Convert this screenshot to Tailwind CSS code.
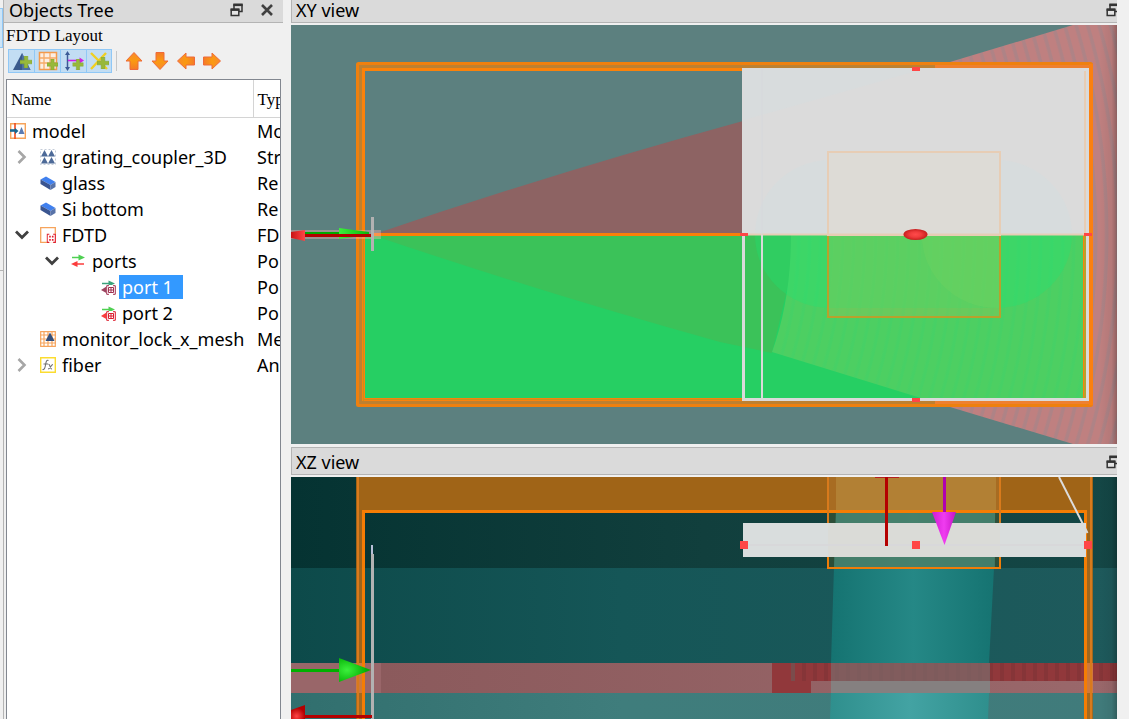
<!DOCTYPE html>
<html lang="en">
<head>
<meta charset="utf-8">
<title>FDTD Layout</title>
<script src="https://cdn.jsdelivr.net/npm/@tailwindcss/browser@4"></script>
</head>
<body class="h-screen overflow-hidden bg-[#f0f0f0] font-['Noto_Sans','Open_Sans',sans-serif] text-[18px] leading-[26px] text-black">
<svg class="absolute size-0">
  <defs>
    <symbol id="restore" viewBox="0 0 13 14"><path d="M4 6V2H12V8.500H9" fill="none" stroke="#333" stroke-width="1.500"/><path d="M3.300 1.800H12.700" stroke="#333" stroke-width="2.600"/><path d="M1.200 7H8.800V12.500H1.200Z" fill="#e4e4e4" stroke="#333" stroke-width="1.500"/><path d="M.5 6.500H9.500" stroke="#333" stroke-width="2.400"/></symbol>
    <symbol id="plus" viewBox="0 0 12 12"><path d="M4.200 0h3.600v4.200H12v3.600H7.800V12H4.200V7.800H0V4.200h4.200z" fill="#98b83a" stroke="#7fa02c" stroke-width=".5"/></symbol>
    <linearGradient id="arrowFill" x1="0" y1="0" x2="0" y2="1"><stop offset="0" stop-color="#f98a2c"/><stop offset=".5" stop-color="#fa9a12"/><stop offset="1" stop-color="#f57a28"/></linearGradient>
    <symbol id="arrow" viewBox="0 0 18 20"><path d="M9 1.500L17 10H13V18.500H5V10H1Z" fill="url(#arrowFill)" stroke="#ee6a3a" stroke-width="1"/></symbol>
    <symbol id="block" viewBox="0 0 16 16"><path d="M.5 4.500L6 1.500L15.500 7L10.500 10Z" fill="#4080ee"/><path d="M.5 4.500L10.500 10V15L.5 9Z" fill="#3a5590"/><path d="M10.500 10L15.500 7V12L10.500 15Z" fill="#5873a8"/></symbol>
    <symbol id="open" viewBox="0 0 14 10"><path d="M1 1.500L7 7.500L13 1.500" fill="none" stroke="#404040" stroke-width="2.800"/></symbol>
    <symbol id="closed" viewBox="0 0 10 14"><path d="M1.500 1L7.500 7L1.500 13" fill="none" stroke="#a6a6a6" stroke-width="2.600"/></symbol>
    <symbol id="solver" viewBox="0 0 10 10"><rect x=".2" y=".2" width="9.600" height="9.600" fill="#fff"/><path d="M3 .6H.7V9.400H3M7 .6H9.300V9.400H7" fill="none" stroke="currentColor" stroke-width="1.200"/><path d="M2.800 2.300h1.700v2H2.800zM5.700 2.300h1.700v2H5.700zM2.800 5.700h1.700v2H2.800zM5.700 5.700h1.700v2H5.700z" fill="currentColor"/></symbol>
    <symbol id="gridport" viewBox="0 0 10 10"><path d="M0 0H10V10H0Z" fill="#fff"/><path d="M3 .7H.7V9.300H3M7 .7H9.300V9.300H7M5 2V8M2.200 5H7.800M2.500 2.500H7.500V7.500H2.500Z" fill="none" stroke="currentColor" stroke-width="1"/></symbol>
  </defs>
</svg>
<div class="flex h-full">
  <!-- edge of the neighbouring dock -->
  <div class="flex w-[3px] shrink-0 flex-col">
    <div class="mt-2 h-10 border-y border-r border-[#90c8f6] bg-[#cce4f7]"></div>
    <div class="mt-[222px] border-t border-[#b4b4b4]"></div>
  </div>

  <aside class="flex w-[280px] shrink-0 flex-col border-l border-[#b4b4b4]">
    <header class="flex h-[23px] shrink-0 items-center border-b border-[#b4b4b4] bg-[#dadada] pr-[9px] pb-[2px] pl-[5px]">
      <h2 class="grow leading-5">Objects Tree</h2>
      <button aria-label="Float" class="mr-[17px] flex"><svg class="h-[14px] w-[13px]"><use href="#restore"/></svg></button>
      <button aria-label="Close" class="flex"><svg class="h-[14px] w-[14px]" viewBox="0 0 14 14"><path d="M2 2L12 12M12 2L2 12" stroke="#404040" stroke-width="2.600"/></svg></button>
    </header>
    <p class="h-[26px] shrink-0 pl-[2px] font-['Liberation_Serif',serif] text-[17px]">FDTD Layout</p>
    <div class="flex h-6 shrink-0 items-center pl-1">
      <button aria-label="Structures" class="flex h-6 w-[27px] items-center justify-center border border-[#90c8f6] bg-[#c2ddf3]"><svg class="h-5 w-5" viewBox="0 0 20 20"><path d="M10 2L18.500 19H1Z" fill="#3b5a8c"/><path d="M10 2L18.500 19H10Z" fill="#4d6fa4"/><use href="#plus" x="8" y="5" width="12" height="12"/></svg></button>
      <button aria-label="Mesh" class="flex h-6 w-[26px] items-center justify-center border border-l-0 border-[#90c8f6] bg-[#c2ddf3]"><svg class="h-5 w-5" viewBox="0 0 20 20"><path d="M1.500 1.500H18.500V18.500H1.500Z" fill="#fbeee3" stroke="#f39a4c" stroke-width="1.500"/><path d="M6 2V18M12 2V18M2 7H18M2 12H18" stroke="#f7ab68" stroke-width="1.300"/><use href="#plus" x="9" y="8" width="11" height="11"/></svg></button>
      <button aria-label="Sources" class="flex h-6 w-[26px] items-center justify-center border border-l-0 border-[#90c8f6] bg-[#c2ddf3]"><svg class="h-5 w-5" viewBox="0 0 20 20"><path d="M3.500 3V17" stroke="#3c5a96" stroke-width="1.500"/><path d="M3.500 0L6 4H1ZM3.500 20L6 16H1Z" fill="#3c5a96"/><path d="M4 9.500H17" stroke="#d21ee6" stroke-width="1.600"/><path d="M20 9.500L15.500 6.500V12.500Z" fill="#d21ee6"/><use href="#plus" x="8.500" y="8" width="11" height="11"/></svg></button>
      <button aria-label="Monitors" class="flex h-6 w-[25px] items-center justify-center border border-l-0 border-[#90c8f6] bg-[#c2ddf3]"><svg class="h-5 w-5" viewBox="0 0 20 20"><path d="M2 2L18 18M17 2L2 18" stroke="#f0cf22" stroke-width="2.400"/><use href="#plus" x="8" y="6" width="12" height="12"/></svg></button>
      <span class="mr-1 ml-1 h-5 border-l border-[#c8c8c8]"></span>
      <button aria-label="Move up" class="flex w-[26px] justify-center"><svg class="h-5 w-[18px]"><use href="#arrow"/></svg></button>
      <button aria-label="Move down" class="flex w-[26px] rotate-180 justify-center"><svg class="h-5 w-[18px]"><use href="#arrow"/></svg></button>
      <button aria-label="Move left" class="flex w-[26px] -rotate-90 justify-center"><svg class="h-5 w-[18px]"><use href="#arrow"/></svg></button>
      <button aria-label="Move right" class="flex w-[26px] rotate-90 justify-center"><svg class="h-5 w-[18px]"><use href="#arrow"/></svg></button>
    </div>
    <div class="mt-[6px] mr-[2px] ml-[2px] grow overflow-hidden border-x border-t border-[#828790] bg-white">
      <table class="w-full table-fixed border-collapse whitespace-nowrap">
        <colgroup><col class="w-[246px]"><col></colgroup>
        <thead>
          <tr class="h-[37px] border-b border-[#d4d4d4] text-left font-['Liberation_Serif',serif] text-[17px]">
            <th class="border-r border-[#d4d4d4] pt-1 pl-1 font-normal">Name</th>
            <th class="overflow-hidden pt-1 pl-1 font-normal">Type</th>
          </tr>
        </thead>
        <tbody>
          <tr class="h-[26px]"><td class="p-0"><div class="flex items-center gap-[6px] pl-[3px]"><svg class="size-4" viewBox="0 0 16 16"><path d="M.7.7H15.300V15.300H.7Z" fill="#fff" stroke="#f6a45c" stroke-width="1.400"/><path d="M5 0V16" stroke="#ee4a1c" stroke-width="1.600"/><path d="M0 7.500H6" stroke="#176690" stroke-width="2.600"/><path d="M8.500 8L5 5V11Z" fill="#176690"/><path d="M11.500 4L14.500 11H8.500Z" fill="#5a7cb4"/></svg>model</div></td><td class="overflow-hidden p-0 pl-1">Mo</td></tr>
          <tr class="h-[26px]"><td class="p-0"><div class="flex items-center pl-[10px]"><svg class="mr-[13px] h-[14px] w-[10px]"><use href="#closed"/></svg><svg class="mr-[6px] size-4" viewBox="0 0 16 16"><path d="M.5.5H15.500V15.500H.5Z" fill="none" stroke="#c4ccd8" stroke-dasharray="2 2"/><path d="M4.500 1L8 7.500H1ZM11.500 1L15 7.500H8ZM4.500 8L8 14.500H1ZM11.500 8L15 14.500H8Z" fill="#4d6a98"/></svg>grating_coupler_3D</div></td><td class="overflow-hidden p-0 pl-1">Str</td></tr>
          <tr class="h-[26px]"><td class="p-0"><div class="flex items-center gap-[6px] pl-[33px]"><svg class="size-4"><use href="#block"/></svg>glass</div></td><td class="overflow-hidden p-0 pl-1">Re</td></tr>
          <tr class="h-[26px]"><td class="p-0"><div class="flex items-center gap-[6px] pl-[33px]"><svg class="size-4"><use href="#block"/></svg>Si bottom</div></td><td class="overflow-hidden p-0 pl-1">Re</td></tr>
          <tr class="h-[26px]"><td class="p-0"><div class="flex items-center pl-[8px]"><svg class="mr-[11px] h-[10px] w-[14px]"><use href="#open"/></svg><svg class="mr-[6px] size-4 text-[#e0202c]" viewBox="0 0 16 16"><path d="M.7.7H15.300V15.300H.7Z" fill="#fff" stroke="#f6a45c" stroke-width="1.300"/><use href="#solver" x="6.500" y="6.500" width="9.500" height="9.500"/></svg>FDTD</div></td><td class="overflow-hidden p-0 pl-1">FD</td></tr>
          <tr class="h-[26px]"><td class="p-0"><div class="flex items-center pl-[38px]"><svg class="mr-[11px] h-[10px] w-[14px]"><use href="#open"/></svg><svg class="mr-[6px] size-4" viewBox="0 0 16 16"><path d="M2 4.500H10" stroke-width="1.500" stroke="#4fd052"/><path d="M15 4.500L8.500 1.500V7.500Z" fill="#4fd052"/><path d="M14 11H6" stroke="#fb3c3c" stroke-width="1.500"/><path d="M1 11L7.500 8V14Z" fill="#fb3c3c"/></svg>ports</div></td><td class="overflow-hidden p-0 pl-1">Po</td></tr>
          <tr class="h-[26px]"><td class="p-0"><div class="flex items-center pl-[93px]"><svg class="mr-[3px] size-4 text-[#a03050]" viewBox="0 0 16 16"><path d="M2 4.500H10" stroke="#3aa27c" stroke-width="1.500"/><path d="M15 4.500L8.500 1.500V7.500Z" fill="#3aa27c"/><path d="M1 11L8 6.500V15Z" fill="#9c4460"/><use href="#gridport" x="6" y="6" width="10" height="10"/></svg><span class="bg-[#3399ff] pr-[10px] pl-[3px] leading-[24px] text-white">port 1</span></div></td><td class="overflow-hidden p-0 pl-1">Po</td></tr>
          <tr class="h-[26px]"><td class="p-0"><div class="flex items-center gap-[6px] pl-[93px]"><svg class="size-4 text-[#dc1c2c]" viewBox="0 0 16 16"><path d="M2 4.500H10" stroke="#4fd052" stroke-width="1.500"/><path d="M15 4.500L8.500 1.500V7.500Z" fill="#4fd052"/><path d="M1 11L8 6.500V15Z" fill="#fb3c3c"/><use href="#gridport" x="6" y="6" width="10" height="10"/></svg>port 2</div></td><td class="overflow-hidden p-0 pl-1">Po</td></tr>
          <tr class="h-[26px]"><td class="p-0"><div class="flex items-center gap-[6px] pl-[33px]"><svg class="size-4" viewBox="0 0 16 16"><path d="M.7.7H15.300V15.300H.7ZM4 0V16M8 0V16M12 0V16M0 4H16M0 8H16M0 12H16" fill="#fff" stroke="#f6a45c" stroke-width="1.200"/><path d="M10 1.500L14.500 10H5.500Z" fill="#34507c"/></svg>monitor_lock_x_mesh</div></td><td class="overflow-hidden p-0 pl-1">Me</td></tr>
          <tr class="h-[26px]"><td class="p-0"><div class="flex items-center pl-[10px]"><svg class="mr-[13px] h-[14px] w-[10px]"><use href="#closed"/></svg><svg class="mr-[6px] size-4" viewBox="0 0 16 16"><path d="M.7.7H15.300V15.300H.7Z" fill="#fff" stroke="#fbdc30" stroke-width="1.400"/><path d="M8.500 3.500C6.500 2.500 6 5 5.500 8S4.500 13 2.500 12.500M3.500 7H8M8.500 7.500C10 6.500 10 12.500 12 12M13 7.500C11 7.500 10.500 12 8 12" fill="none" stroke="#707070" stroke-width="1.100"/></svg>fiber</div></td><td class="overflow-hidden p-0 pl-1">An</td></tr>
        </tbody>
      </table>
    </div>
  </aside>

  <main class="ml-2 flex min-w-0 grow flex-col">
    <header class="flex h-[23px] shrink-0 items-center overflow-hidden border-b border-l border-[#b4b4b4] bg-[#dadada] pb-[2px] pl-1">
      <h2 class="grow leading-5">XY view</h2>
      <button aria-label="Float XY view" class="-mr-[2px] flex"><svg class="h-[14px] w-[13px]"><use href="#restore"/></svg></button>
    </header>
    <svg class="mt-[2px] min-h-0 w-full flex-[419]" viewBox="291 25 826 419" preserveAspectRatio="xMinYMin slice" role="img" aria-label="XY view">
      <defs>
        <radialGradient id="rings" gradientUnits="userSpaceOnUse" cx="372" cy="235" r="11" spreadMethod="repeat"><stop offset="0" stop-color="#bf8080"/><stop offset=".55" stop-color="#bf8080"/><stop offset=".7" stop-color="#ae8386"/><stop offset=".9" stop-color="#ae8386"/><stop offset="1" stop-color="#bf8080"/></radialGradient>
        <radialGradient id="ringsGreen" gradientUnits="userSpaceOnUse" cx="372" cy="235" r="11" spreadMethod="repeat"><stop offset="0" stop-color="#4dcf62"/><stop offset=".55" stop-color="#4dcf62"/><stop offset=".75" stop-color="#47d065"/><stop offset=".9" stop-color="#47d065"/><stop offset="1" stop-color="#4dcf62"/></radialGradient>
        <clipPath id="lower"><path d="M365 235H1086V399H365Z"/></clipPath>
        <radialGradient id="ball"><stop offset="0" stop-color="#ff4a4a"/><stop offset=".5" stop-color="#f03c3c"/><stop offset="1" stop-color="#c81e1e"/></radialGradient>
        <linearGradient id="greenCone"><stop offset="0" stop-color="#3cf03c"/><stop offset="1" stop-color="#0ab40a"/></linearGradient>
        <linearGradient id="redCone"><stop offset="0" stop-color="#c81414"/><stop offset="1" stop-color="#ff4646"/></linearGradient>
        <linearGradient id="edgeShade"><stop offset="0" stop-color="#000" stop-opacity="0"/><stop offset=".7" stop-color="#000" stop-opacity=".06"/><stop offset="1" stop-color="#000" stop-opacity=".25"/></linearGradient>
      </defs>
      <path d="M291 25H1117V444H291Z" fill="#5c807f"/>
      <path d="M372 235Q550 174 743 121V235Z" fill="#8d6363"/>
      <path d="M780 113L950 62L1073 25H1117V444H1073L950 407L772 352Q791 300 791 235Z" fill="url(#rings)"/>
      <g clip-path="url(#lower)">
        <path d="M365 235H1086V399H365Z" fill="#26cf63"/>
        <path d="M372 235Q550 295 720 342L772 353L800 235Z" fill="#3bc259"/>
        <path d="M772 352L950 407H1093V235H791Q791 300 772 352Z" fill="url(#ringsGreen)"/>
        <path d="M755 235H1072A75 73 0 0 1 997 308H830A75 73 0 0 1 755 235Z" fill="#14e878" fill-opacity=".28"/>
        <path d="M828 235H1000V317H828Z" fill="#c8b84c" fill-opacity=".23"/>
        <path d="M922 235A75 73 0 0 0 997 308H1000V235Z" fill="#84d860" fill-opacity=".2"/>
      </g>
      <path d="M828 235V317H1000V235" fill="none" stroke="#b9a02c" stroke-width="2"/>
      <g fill="none">
        <rect x="360.500" y="66.500" width="728" height="336" stroke="#be8030" stroke-width="3"/>
        <path d="M935 66.500H1090M935 402.500H1090" stroke="#ee8030" stroke-width="3"/>
        <rect x="357.500" y="63.500" width="734" height="342" rx="1" stroke="#ee800f" stroke-width="3"/>
        <rect x="363.500" y="69.500" width="721" height="330" stroke="#fb820a" stroke-width="3"/>
        <path d="M1091 64V405" stroke="#fb8010" stroke-width="4"/>
        <path d="M372 234.500H743" stroke="#fa8008" stroke-width="3"/>
        <path d="M363.500 239V401M363 399.500H743" stroke="#c8901c" stroke-width="1"/>
        <path d="M1085 235V399" stroke="#b9a02c" stroke-width="2"/>
      </g>
      <path d="M742 68H1089V235H742Z" fill="#dbdbdb"/>
      <path d="M744 70H920L744 120Z" fill="#d8dcdd"/>
      <path d="M755 235A75 75 0 0 1 830 160H997A75 75 0 0 1 1072 235Z" fill="#d7dcdd"/>
      <path d="M828 152H1000V235H828Z" fill="#dddbd6" stroke="#e7cdb5" stroke-width="2"/>
      <path d="M744 234.500H1087M1085 71V234" fill="none" stroke="#e7cdb5" stroke-width="2"/>
      <path d="M762 69V235" stroke="#d6d8dc" stroke-width="1"/>
      <path d="M743.500 235V399.500H1087.500V235" fill="none" stroke="#dadada" stroke-width="3"/>
      <path d="M762 235V399" stroke="#dadada" stroke-width="2"/>
      <path d="M912 67H920V71H912ZM912 398H920V402H912ZM740 233H748V236H740ZM1084 233H1092V236H1084Z" fill="#ff4646"/>
      <ellipse cx="915.500" cy="234.500" rx="12" ry="5.500" fill="url(#ball)"/>
      <path d="M291 230H381V239H291Z" fill="#ffb0b0" fill-opacity=".4"/>
      <path d="M305 233H345" stroke="#00aa00" stroke-width="2"/>
      <path d="M339 228L369 232V235L339 239Z" fill="url(#greenCone)"/>
      <path d="M305 235.500H372" stroke="#b40000" stroke-width="3"/>
      <path d="M291 232L305 230V241L291 238Z" fill="url(#redCone)"/>
      <path d="M372.500 217V251" stroke="#b2b2b2" stroke-width="3"/>
      <path d="M1099 25H1117V444H1099Z" fill="url(#edgeShade)"/>
    </svg>

    <header class="mt-[3px] flex h-[28px] shrink-0 items-center overflow-hidden border-y border-l border-[#b4b4b4] bg-[#dadada] pt-[2px] pl-1">
      <h2 class="grow leading-6">XZ view</h2>
      <button aria-label="Float XZ view" class="-mr-[2px] flex"><svg class="h-[14px] w-[13px]"><use href="#restore"/></svg></button>
    </header>
    <svg class="mt-[2px] min-h-0 w-full flex-[242]" viewBox="291 477 826 242" preserveAspectRatio="xMinYMin slice" role="img" aria-label="XZ view">
      <defs>
        <linearGradient id="sky"><stop offset="0" stop-color="#053332"/><stop offset=".5" stop-color="#113f3d"/><stop offset="1" stop-color="#144746"/></linearGradient>
        <linearGradient id="oxide"><stop offset="0" stop-color="#0d4a4a"/><stop offset=".4" stop-color="#155657"/><stop offset="1" stop-color="#1e5a5c"/></linearGradient>
        <linearGradient id="base"><stop offset="0" stop-color="#316f6e"/><stop offset=".4" stop-color="#3f7d7c"/><stop offset="1" stop-color="#407b7b"/></linearGradient>
        <linearGradient id="core"><stop offset="0" stop-color="#157371"/><stop offset=".5" stop-color="#258886"/><stop offset="1" stop-color="#157371"/></linearGradient>
        <linearGradient id="coreLow"><stop offset="0" stop-color="#2f8f8d"/><stop offset=".5" stop-color="#43a3a3"/><stop offset="1" stop-color="#2f8f8d"/></linearGradient>
        <linearGradient id="wave"><stop offset="0" stop-color="#8b5a5c"/><stop offset="1" stop-color="#9a686b"/></linearGradient>
        <linearGradient id="magCone"><stop offset="0" stop-color="#d01cd0"/><stop offset=".5" stop-color="#f03cf0"/><stop offset="1" stop-color="#c414c4"/></linearGradient>
        <radialGradient id="greenTip" cx=".25" cy=".5" r=".6"><stop offset="0" stop-color="#3cf03c"/><stop offset="1" stop-color="#04b004"/></radialGradient>
        <radialGradient id="redTip" cx=".4" cy=".8" r=".6"><stop offset="0" stop-color="#ff4646"/><stop offset="1" stop-color="#b40000"/></radialGradient>
        <pattern id="teeth" width="11" height="18" patternUnits="userSpaceOnUse" x="802" y="663"><path d="M0 0H11V18H0Z" fill="#91383b"/><path d="M0 0H4V18H0Z" fill="#863538"/></pattern>
      </defs>
      <path d="M291 477H1117V568H291Z" fill="url(#sky)"/>
      <path d="M291 568H1117V663H291Z" fill="url(#oxide)"/>
      <path d="M291 693H1117V719H291Z" fill="url(#base)"/>
      <path d="M837 477H996L994 568L989 663H831L834 568Z" fill="url(#core)"/>
      <path d="M831 693H989L988 719H830Z" fill="url(#coreLow)"/>
      <path d="M291 663H381V693H291Z" fill="#996669"/>
      <path d="M381 663H1117V693H381Z" fill="url(#wave)"/>
      <path d="M772 663H1117V681H811V693H772Z" fill="#91383b"/>
      <path d="M802 663H1117V681H802Z" fill="url(#teeth)"/>
      <path d="M791 663H795V681H791Z" fill="#7a4c4c"/>
      <path d="M831 663H990V681H831Z" fill="#797070" fill-opacity=".65"/>
      <path d="M831 681H990V693H831Z" fill="#858080"/>
      <path d="M828 513H1000V568H828Z" fill="#58622e" fill-opacity=".4"/>
      <path d="M836 513H995V568H834Z" fill="#4c8472" fill-opacity=".7"/>
      <path d="M356 477H1093V511H356Z" fill="#a06417"/>
      <path d="M828 477H1000V511H828Z" fill="#a86c22"/>
      <path d="M836 477H996V511H836Z" fill="#b28034"/>
      <path d="M356 511H365V719H356ZM1084 511H1093V719H1084Z" fill="#ad6818" fill-opacity=".9"/>
      <path d="M356 663H365V693H356ZM1084 663H1093V693H1084Z" fill="#e08048" fill-opacity=".7"/>
      <path d="M358 477V719M1091 477V719" stroke="#d87a1c" stroke-width="2"/>
      <path d="M363.500 719V511.500H1085.500V719" fill="none" stroke="#f57d04" stroke-width="3"/>
      <path d="M828 477V568M1000 477V568" stroke="#d87a1c" stroke-width="2"/>
      <path d="M743 523H1086V557H743Z" fill="#d9dddd"/>
      <path d="M828 523H1000V557H828Z" fill="#dadbd7"/>
      <path d="M743 545H1086" stroke="#d8d8da" stroke-width="2"/>
      <path d="M828 557V568H1000V557" fill="none" stroke="#ef7d08" stroke-width="2"/>
      <path d="M1059 477L1087.500 533" stroke="#dcdcdc" stroke-width="2"/>
      <path d="M875 477H899" stroke="#b42020" stroke-width="2"/>
      <path d="M886.500 477V546" stroke="#b40000" stroke-width="3"/>
      <path d="M944.500 477V513" stroke="#b000b0" stroke-width="3"/>
      <path d="M932 512H956L944.500 545Z" fill="url(#magCone)"/>
      <path d="M740 541H748V549H740ZM912 541H920V549H912ZM1084 541H1092V549H1084Z" fill="#ff4646"/>
      <path d="M291 670.500H345" stroke="#00b000" stroke-width="3"/>
      <path d="M339 658L371 670L339 682Z" fill="url(#greenTip)"/>
      <path d="M372 545V554" stroke="#b8c0d8" stroke-width="2"/>
      <path d="M372.500 554V719" stroke="#b2b2b2" stroke-width="3"/>
      <path d="M305 716.500H372" stroke="#b40000" stroke-width="3"/>
      <path d="M291 710L305 705V719H291Z" fill="url(#redTip)"/>
      <path d="M1099 477H1117V719H1099Z" fill="url(#edgeShade)"/>
    </svg>
  </main>
  <div class="w-3 shrink-0 bg-[#f0f0f0]"></div>
</div>
</body>
</html>
